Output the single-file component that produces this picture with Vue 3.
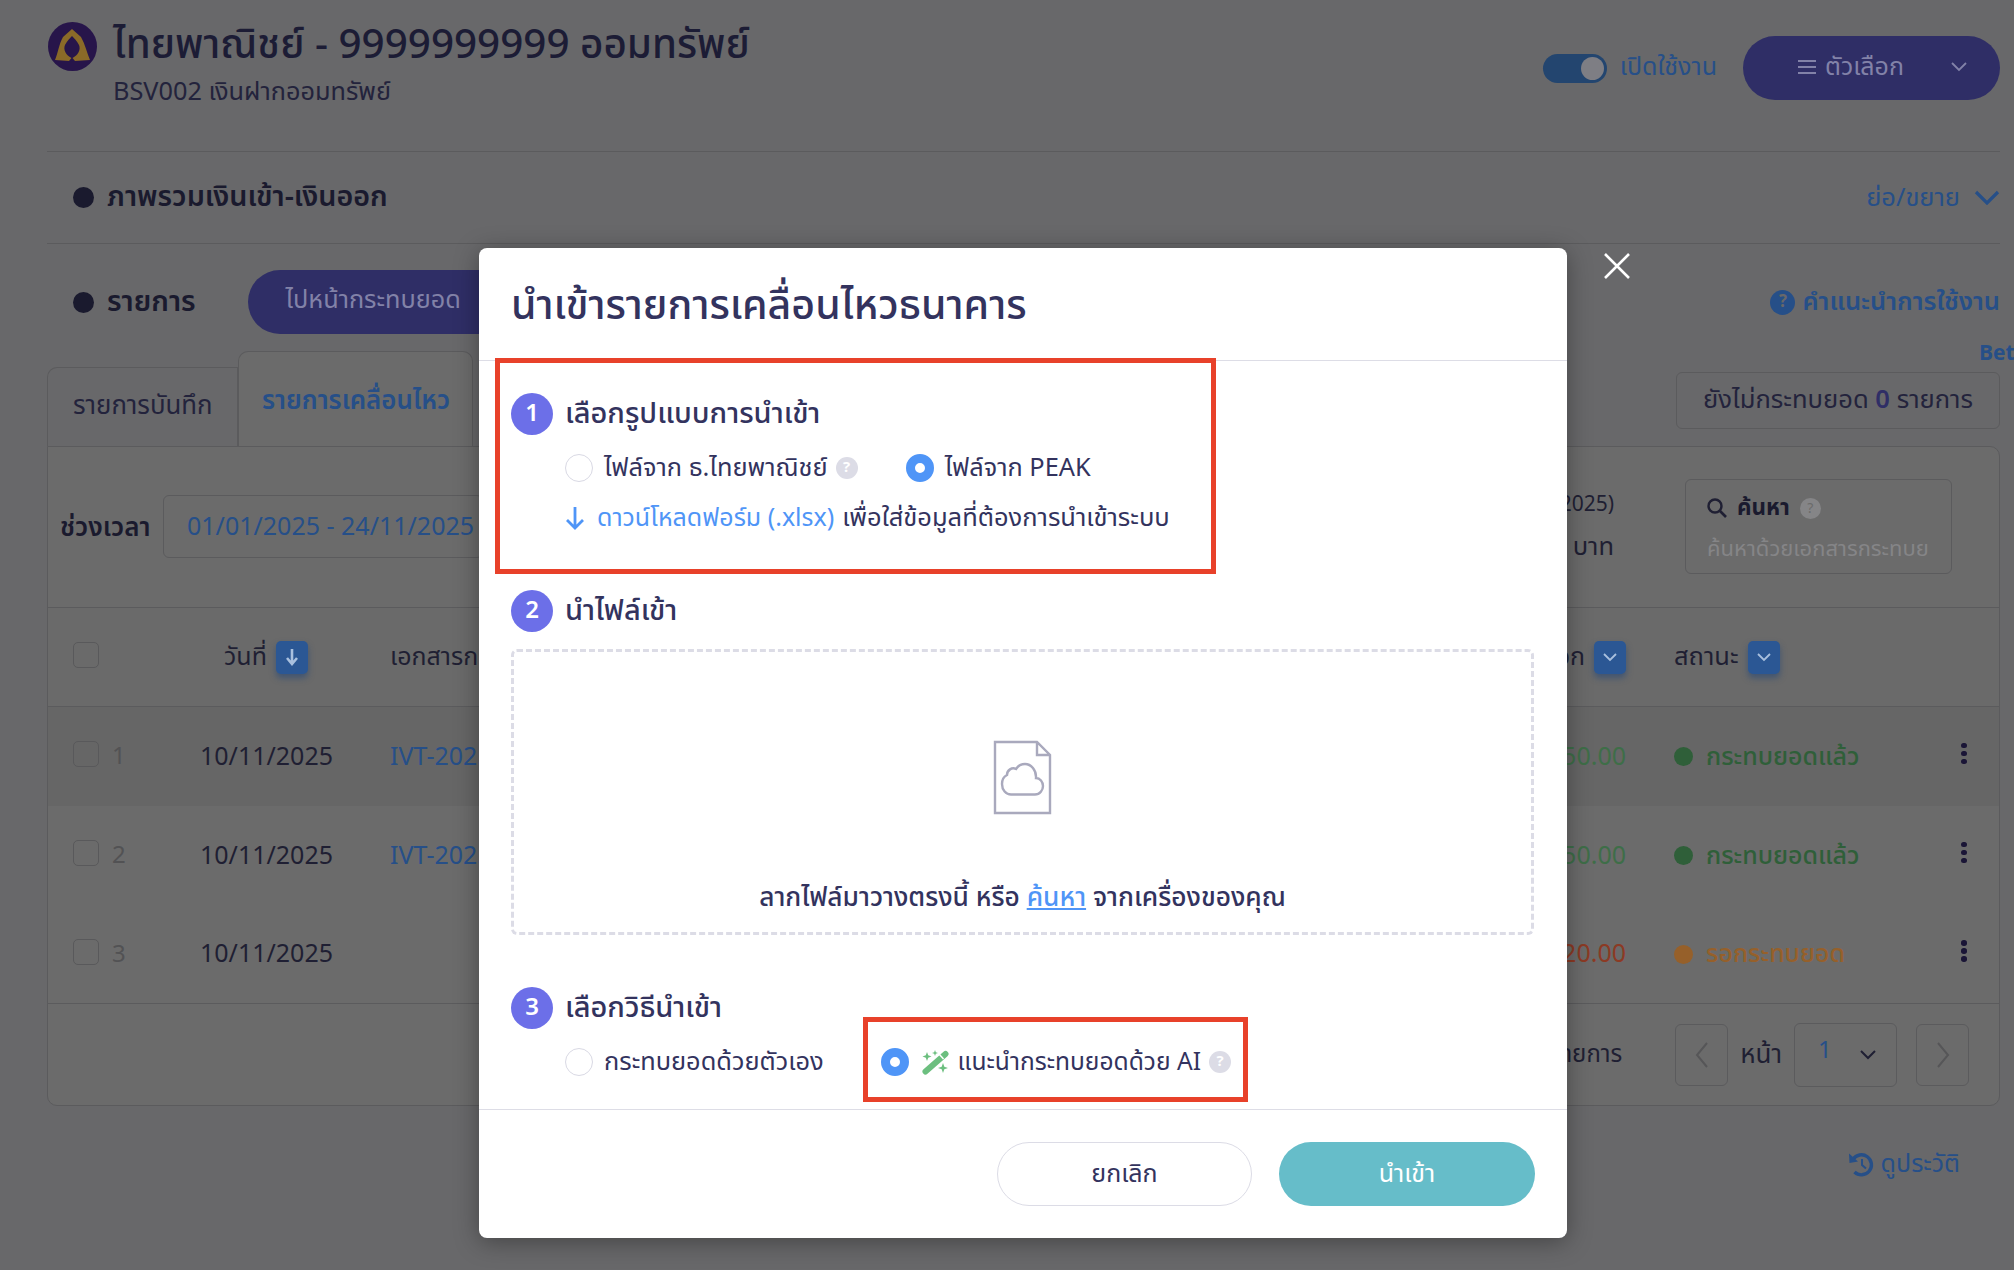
<template>
  <div class="page">
    <!-- Account header -->
    <header class="acc-head">
      <svg class="bank-logo" viewBox="0 0 49 49">
        <circle cx="24.5" cy="24.5" r="24.5" fill="#27154a" />
        <path d="M24 7 L33 15 C37 22 39 31 42 38 L27 39 L24.500 36 C30 33 33 28 31 23 C29 19 26 16 24 14 C22 16 19 19 17 23 C15 28 18 33 23.500 36 L21 39 L7 38 C10 31 11 22 15 15 Z" fill="#8a6a28" />
      </svg>
      <div class="acc-title">
        <h1>ไทยพาณิชย์ - 9999999999 ออมทรัพย์</h1>
        <p>BSV002 เงินฝากออมทรัพย์</p>
      </div>
      <div class="acc-actions">
        <span class="toggle"><span class="knob"></span></span>
        <span class="toggle-label">เปิดใช้งาน</span>
        <button class="options-btn">
          <svg class="burger" viewBox="0 0 18 14"><path d="M0 1h18M0 7h18M0 13h18" stroke="#8282a8" stroke-width="2" /></svg>
          <span>ตัวเลือก</span>
          <svg class="caret" viewBox="0 0 16 10"><path d="M1 1l7 7 7-7" fill="none" stroke="#8282a8" stroke-width="1.8" /></svg>
        </button>
      </div>
    </header>

    <section class="overview">
      <span class="dot"></span>
      <h2>ภาพรวมเงินเข้า-เงินออก</h2>
      <span class="collapse">ย่อ/ขยาย</span>
      <svg class="collapse-icon" viewBox="0 0 26 15"><path d="M2 2l11 11L24 2" fill="none" stroke="#264f88" stroke-width="3.2" /></svg>
    </section>

    <section class="list-head">
      <span class="dot"></span>
      <h2>รายการ</h2>
      <button class="goto-btn">ไปหน้ากระทบยอด</button>
      <a class="guide">
        <span class="guide-icon">?</span>
        คำแนะนำการใช้งาน
      </a>
    </section>

    <div class="tabs">
      <div class="tab">รายการบันทึก</div>
      <div class="tab active">รายการเคลื่อนไหว</div>
      <div class="pending">ยังไม่กระทบยอด <b>0</b> รายการ</div>
      <span class="beta">Beta</span>
    </div>

    <!-- Statement table -->
    <div class="card">
      <div class="filters">
        <label>ช่วงเวลา</label>
        <div class="date-input">01/01/2025 - 24/11/2025</div>
        <div class="balance">
          <span>(24/11/2025)</span>
          <span>0.00 บาท</span>
        </div>
        <div class="search">
          <div class="search-top">
            <svg viewBox="0 0 20 20"><circle cx="8" cy="8" r="6.5" fill="none" stroke="#1f1f33" stroke-width="2.4" /><path d="M13 13l6 6" stroke="#1f1f33" stroke-width="2.6" /></svg>
            <b>ค้นหา</b>
            <span class="dim-help">?</span>
          </div>
          <div class="search-hint">ค้นหาด้วยเอกสารกระทบย</div>
        </div>
      </div>

      <div class="row head">
        <div class="cell-check"><span class="check"></span></div>
        <div class="head-date">วันที่ <span class="sort"><svg viewBox="0 0 14 18"><path d="M7 1v15M2 10l5 6 5-6" fill="none" stroke="#a9c0de" stroke-width="2.6" /></svg></span></div>
        <div>เอกสารกระทบยอด</div>
        <div class="head-amount">เงินออก <span class="sort"><svg viewBox="0 0 14 9"><path d="M1 1l6 6 6-6" fill="none" stroke="#a9c0de" stroke-width="1.8" /></svg></span></div>
        <div class="head-status">สถานะ <span class="sort"><svg viewBox="0 0 14 9"><path d="M1 1l6 6 6-6" fill="none" stroke="#a9c0de" stroke-width="1.8" /></svg></span></div>
        <div></div>
      </div>

      <div v-for="r in rows" :key="r.no" class="row" :class="{ shaded: r.no === 1 }">
        <div class="cell-check"><span class="check"></span><span class="no">{{ r.no }}</span></div>
        <div>{{ r.date }}</div>
        <div class="doc">{{ r.doc }}</div>
        <div class="amount" :class="r.kind">{{ r.amount }}</div>
        <div class="status" :class="r.kind"><span class="status-dot"></span>{{ r.status }}</div>
        <div class="kebab"><i></i><i></i><i></i></div>
      </div>

      <div class="pager">
        <span class="total">ทั้งหมด 3 รายการ</span>
        <button class="page-btn"><svg viewBox="0 0 14 28"><path d="M12 2L2 14l10 12" fill="none" stroke="#565658" stroke-width="2" /></svg></button>
        <span>หน้า</span>
        <div class="page-select">
          <span>1</span>
          <svg viewBox="0 0 16 10"><path d="M1 1l7 7 7-7" fill="none" stroke="#1f1f33" stroke-width="2" /></svg>
        </div>
        <button class="page-btn"><svg viewBox="0 0 14 28"><path d="M2 2l10 12L2 26" fill="none" stroke="#565658" stroke-width="2" /></svg></button>
      </div>
    </div>

    <div class="history">
      <svg viewBox="0 0 26 25">
        <path d="M5 7.500A10 10 0 1 1 6.500 20" fill="none" stroke="#264f88" stroke-width="3.4" />
        <path d="M1 1.500L10 9.500L1.500 11Z" fill="#264f88" />
        <path d="M14 7v6l4 3.500" fill="none" stroke="#264f88" stroke-width="2" />
      </svg>
      ดูประวัติ
    </div>

    <!-- Import dialog -->
    <div class="overlay">
      <div class="modal">
        <button class="close">
          <svg viewBox="0 0 26 26"><path d="M1 1l24 24M25 1L1 25" stroke="#fff" stroke-width="2.6" /></svg>
        </button>

        <div class="modal-head">นำเข้ารายการเคลื่อนไหวธนาคาร</div>

        <div class="modal-body">
          <div class="step">
            <span class="step-no">1</span>
            <span>เลือกรูปแบบการนำเข้า</span>
          </div>
          <div class="opts first">
            <span class="radio"></span>
            <span class="opt-label">ไฟล์จาก ธ.ไทยพาณิชย์</span>
            <span class="help">?</span>
            <span class="radio on second"></span>
            <span class="opt-label">ไฟล์จาก PEAK</span>
          </div>
          <div class="download">
            <svg viewBox="0 0 20 24"><path d="M10 1v21M2 14l8 8 8-8" fill="none" stroke="#4f95f7" stroke-width="2.8" /></svg>
            <a>ดาวน์โหลดฟอร์ม (.xlsx)</a>
            <span>เพื่อใส่ข้อมูลที่ต้องการนำเข้าระบบ</span>
          </div>

          <div class="step gap">
            <span class="step-no">2</span>
            <span>นำไฟล์เข้า</span>
          </div>
          <div class="dropzone">
            <svg class="file-icon" viewBox="0 0 59 75">
              <path d="M2 2H44L57 15V73H2Z M44 2V15H57" fill="none" stroke="#a9a9bd" stroke-width="2.4" />
              <path d="M18 54.5H42C47 54.5 50 50 50 46C50 42 47 38 43 38C43.5 30 38 24 32 24C28 24 25 26 23 29C19 27 14 30 14 35C10 37 9 40 9 44C9 50 13 54.5 18 54.5Z" fill="none" stroke="#a9a9bd" stroke-width="2.4" />
            </svg>
            <div class="drop-text">ลากไฟล์มาวางตรงนี้ หรือ <a>ค้นหา</a> จากเครื่องของคุณ</div>
          </div>

          <div class="step gap">
            <span class="step-no">3</span>
            <span>เลือกวิธีนำเข้า</span>
          </div>
          <div class="opts first">
            <span class="radio"></span>
            <span class="opt-label manual">กระทบยอดด้วยตัวเอง</span>
            <span class="radio on ai"></span>
            <svg class="wand" viewBox="0 0 27 25">
              <path d="M3.500 21.500L23.500 4" stroke="#6cbf7f" stroke-width="6" stroke-linecap="round" />
              <path d="M17.500 4.500l4 4.500" stroke="#fff" stroke-width="1.500" />
              <path d="M5 2l1.200 3.300L9.500 6.500 6.200 7.700 5 11 3.800 7.700.5 6.500 3.800 5.300zM21 13l1.300 3.700L26 18l-3.700 1.300L21 23l-1.300-3.700L16 18l3.700-1.300zM13 0l.8 2.200L16 3l-2.200.8L13 6l-.8-2.200L10 3l2.200-.8z" fill="#6cbf7f" />
            </svg>
            <span class="opt-label ai-label">แนะนำกระทบยอดด้วย AI</span>
            <span class="help">?</span>
          </div>
        </div>

        <div class="modal-foot">
          <button class="btn ghost">ยกเลิก</button>
          <button class="btn solid">นำเข้า</button>
        </div>

        <!-- review annotations drawn on top of the dialog -->
        <div class="mark mark-format"></div>
        <div class="mark mark-method"></div>
      </div>
    </div>
  </div>
</template>

<script setup>
const rows = [
  { no: 1, date: "10/11/2025", doc: "IVT-20251100001", amount: "1,250.00", status: "กระทบยอดแล้ว", kind: "done" },
  { no: 2, date: "10/11/2025", doc: "IVT-20251100002", amount: "1,250.00", status: "กระทบยอดแล้ว", kind: "done" },
  { no: 3, date: "10/11/2025", doc: "", amount: "1,620.00", status: "รอกระทบยอด", kind: "wait" }
];
</script>

<style>
html, body { background: #68686a; }
</style>

<style scoped>
.page {
  position: relative;
  width: 2014px;
  height: 1270px;
  overflow: hidden;
  box-sizing: border-box;
  padding: 0 14px 0 47px;
  background: #68686a;
  color: #1f1f33;
  font-family: "Noto Sans Thai", "Noto Sans", "Open Sans", sans-serif;
  font-size: 24px;
}
button { font-family: inherit; border: 0; padding: 0; }
h1, h2, p { margin: 0; }

/* Header */
.acc-head {
  display: flex;
  align-items: flex-start;
  height: 152px;
  box-sizing: border-box;
  padding-top: 22px;
  border-bottom: 1px solid #5b5b5d;
}
.bank-logo { width: 49px; height: 49px; margin-left: 1px; flex: none; }
.acc-title { margin-left: 16px; padding-top: 1px; }
.acc-title h1 {
  font-size: 40.4px;
  font-weight: 500;
  line-height: 46px;
  color: #1c1c35;
}
.acc-title p { margin-top: 5px; font-size: 25.3px; line-height: 36px; color: #23233c; }
.acc-actions { margin-left: auto; display: flex; align-items: center; margin-top: 14px; }
.toggle {
  width: 64px;
  height: 29px;
  border-radius: 15px;
  background: #23456f;
  position: relative;
}
.knob {
  position: absolute;
  right: 3px;
  top: 3px;
  width: 23px;
  height: 23px;
  border-radius: 50%;
  background: #7e7e84;
}
.toggle-label { margin: -3px 0 0 13px; color: #264f88; font-size: 25px; }
.options-btn {
  margin-left: 26px;
  width: 257px;
  height: 64px;
  border-radius: 32px;
  background: #2f2e66;
  color: #8282a8;
  font-size: 25px;
  display: flex;
  align-items: center;
  padding: 0 0 3px 55px;
}
.burger { width: 18px; height: 14px; margin-right: 9px; }
.caret { width: 16px; height: 10px; margin-left: 47px; }

/* Section rows */
.overview {
  display: flex;
  align-items: center;
  height: 92px;
  padding-left: 26px;
  box-sizing: border-box;
  border-bottom: 1px solid #5b5b5d;
}
.dot { width: 21px; height: 21px; border-radius: 50%; background: #1a1a2e; flex: none; }
.overview h2, .list-head h2 {
  margin-left: 13px;
  font-size: 28.7px;
  font-weight: 600;
  color: #1a1a2e;
}
.collapse { margin-left: auto; color: #264f88; font-size: 25.5px; }
.collapse-icon { width: 26px; height: 15px; margin-left: 14px; }

.list-head {
  display: flex;
  align-items: center;
  height: 64px;
  margin-top: 26px;
  padding-left: 26px;
}
.goto-btn {
  margin-left: 52px;
  width: 400px;
  height: 64px;
  border-radius: 32px;
  background: #2f2e66;
  color: #8282a8;
  font-size: 25.3px;
  text-align: left;
  padding: 0 0 4px 38px;
}
.guide {
  margin-left: auto;
  display: flex;
  align-items: center;
  gap: 7px;
  color: #264f88;
  font-size: 25.500px;
  font-weight: 600;
}
.guide-icon {
  width: 25px;
  height: 25px;
  border-radius: 50%;
  background: #264f88;
  color: #68686a;
  font-size: 17px;
  font-weight: 700;
  text-align: center;
  line-height: 25px;
}

/* Tabs */
.tabs {
  position: relative;
  display: flex;
  align-items: flex-end;
  height: 94px;
  margin-top: 18px;
}
.tab {
  box-sizing: border-box;
  width: 191px;
  height: 79px;
  padding: 19px 0 0 25px;
  border: 1px solid #5b5b5d;
  border-bottom: 0;
  border-radius: 10px 0 0 0;
  font-size: 25.8px;
  color: #23233c;
  white-space: nowrap;
}
.tab.active {
  width: 235px;
  height: 95px;
  padding: 30px 0 0 23px;
  background: #6b6b6b;
  border-radius: 10px 10px 0 0;
  color: #264f88;
  font-weight: 600;
}
.pending {
  margin: 0 0 17px auto;
  box-sizing: border-box;
  width: 324px;
  height: 57px;
  border: 1px solid #5b5b5d;
  border-radius: 6px;
  text-align: center;
  line-height: 56px;
  font-size: 25.6px;
  color: #23233c;
}
.pending b { color: #2f2e66; font-weight: 600; }
.beta {
  position: absolute;
  left: 1932px;
  top: -14px;
  color: #264f88;
  font-size: 21px;
  font-weight: 700;
}

/* Card + table */
.card {
  border: 1px solid #5b5b5d;
  border-radius: 0 10px 10px 10px;
  background: #6b6b6b;
  height: 660px;
  box-sizing: border-box;
}
.filters {
  display: flex;
  align-items: flex-start;
  height: 161px;
  box-sizing: border-box;
  padding: 32px 47px 0 12px;
  border-bottom: 1px solid #5b5b5d;
}
.filters label { margin-top: 29px; font-weight: 600; width: 103px; font-size: 26px; color: #1a1a2e; }
.date-input {
  margin-top: 16px;
  width: 320px;
  height: 63px;
  box-sizing: border-box;
  border: 1px solid #5b5b5d;
  border-radius: 6px;
  padding-left: 23px;
  line-height: 62px;
  color: #264f88;
  font-size: 25px;
  white-space: nowrap;
}
.balance {
  margin-left: auto;
  margin-right: 71px;
  display: flex;
  flex-direction: column;
  align-items: flex-end;
  gap: 6px;
  line-height: 36px;
  margin-top: 8px;
  font-size: 25.5px;
}
.balance span:first-child { font-size: 21px; }
.search {
  box-sizing: border-box;
  width: 267px;
  height: 95px;
  border: 1px solid #5b5b5d;
  border-radius: 6px;
  padding: 11px 21px;
}
.search-top { display: flex; align-items: center; gap: 10px; font-size: 22.5px; color: #1a1a2e; }
.search-top svg { width: 20px; height: 20px; }
.dim-help {
  width: 21px;
  height: 21px;
  border-radius: 50%;
  background: #858587;
  color: #6b6b6b;
  font-size: 14px;
  line-height: 21px;
  text-align: center;
  margin-left: 0;
}
.search-hint { margin-top: 8px; color: #858587; font-size: 22px; white-space: nowrap; overflow: hidden; }

.row {
  display: grid;
  grid-template-columns: 127px 190px 1fr 240px 303px 70px;
  align-items: center;
  height: 99px;
  box-sizing: border-box;
  padding-left: 25px;
  border-bottom: 1px solid #5b5b5d;
  font-size: 25px;
  color: #1f1f33;
  white-space: nowrap;
  overflow: hidden;
}
.row:not(.head):not(.shaded):not(:nth-last-child(2)) { border-bottom: 0; }
.row.head { font-size: 25px; background: #6a6a6a; }
.row.shaded { background: #666666; border-bottom: 0; }
.cell-check { display: flex; align-items: center; gap: 14px; margin-top: -5px; }
.check {
  width: 26px;
  height: 26px;
  box-sizing: border-box;
  border: 1px solid #59595b;
  border-radius: 5px;
}
.no { color: #525254; font-size: 24px; margin: 6px 0 0 -1px; }
.doc { color: #264f88; }
.head-date { padding-left: 24px; display: flex; align-items: center; gap: 9px; }
.head-amount { display: flex; justify-content: flex-end; align-items: center; gap: 9px; padding-right: 0; }
.head-status { padding-left: 48px; display: flex; align-items: center; gap: 9px; font-size: 25.5px; }
.sort {
  width: 32px;
  height: 33px;
  border-radius: 5px;
  background: #2b5794;
  box-shadow: 0 4px 6px rgba(35, 70, 120, .6);
  display: flex;
  align-items: center;
  justify-content: center;
}
.sort svg { width: 14px; }
.amount { text-align: right; }
.amount.done { color: #3e6e48; }
.amount.wait { color: #8c3a24; }
.status { padding-left: 48px; display: flex; align-items: center; font-weight: 500; }
.status.done { color: #2f5f39; }
.status.wait { color: #96602a; }
.status-dot { width: 19px; height: 19px; border-radius: 50%; margin-right: 13px; background: currentColor; }
.kebab { display: flex; flex-direction: column; align-items: center; gap: 2.500px; margin-top: -6px; }
.kebab i { width: 5.500px; height: 5.500px; border-radius: 50%; background: #1a1536; }

.pager {
  display: flex;
  align-items: center;
  justify-content: flex-end;
  height: 101px;
  padding-right: 30px;
  font-size: 24px;
}
.total { margin-right: 53px; }
.page-btn {
  width: 53px;
  height: 62px;
  background: transparent;
  border: 1px solid #5b5b5d;
  border-radius: 6px;
  display: flex;
  align-items: center;
  justify-content: center;
}
.page-btn svg { width: 14px; height: 28px; }
.pager > span:nth-of-type(2) { margin: 0 12px; font-size: 26px; }
.page-select {
  box-sizing: border-box;
  width: 103px;
  height: 64px;
  margin-right: 19px;
  border: 1px solid #5b5b5d;
  border-radius: 6px;
  display: flex;
  align-items: center;
  padding-left: 23px;
  color: #264f88;
}
.page-select span { margin-top: -8px; }
.page-select svg { width: 16px; height: 10px; margin-left: 28px; }

.history {
  display: flex;
  justify-content: flex-end;
  align-items: center;
  gap: 7px;
  margin-top: 39px;
  padding-right: 40px;
  color: #264f88;
  font-size: 25px;
}
.history svg { width: 26px; height: 25px; }

/* Dialog */
.overlay {
  position: absolute;
  inset: 0;
  padding: 248px 0 0 479px;
}
.modal {
  position: relative;
  box-sizing: border-box;
  width: 1088px;
  height: 990px;
  background: #fff;
  border-radius: 8px;
  box-shadow: 0 4px 24px rgba(0, 0, 0, .35);
  color: #33335e;
}
.close {
  position: absolute;
  left: 1125px;
  top: 5px;
  width: 26px;
  height: 26px;
  background: transparent;
}
.close svg { display: block; width: 26px; height: 26px; }
.modal-head {
  box-sizing: border-box;
  height: 113px;
  padding: 30px 0 0 32px;
  border-bottom: 1px solid #dddde6;
  font-size: 41px;
  font-weight: 500;
  line-height: 56px;
}
.modal-body {
  box-sizing: border-box;
  height: 749px;
  padding: 32px 33px 0 32px;
  border-bottom: 1px solid #dddde6;
}
.step {
  display: flex;
  align-items: center;
  height: 42px;
  gap: 12px;
  font-size: 29px;
  font-weight: 500;
}
.step.gap { margin-top: 52px; }
.step-no {
  width: 42px;
  height: 42px;
  border-radius: 50%;
  background: #6c6fe8;
  color: #fff;
  text-align: center;
  line-height: 42px;
  font-size: 24px;
  font-weight: 600;
}
.opts {
  display: flex;
  align-items: center;
  height: 40px;
  margin-top: 13px;
  padding-left: 54px;
  font-size: 25.4px;
}
.radio {
  box-sizing: border-box;
  width: 28px;
  height: 28px;
  flex: none;
  border: 1px solid #d9d9e4;
  border-radius: 50%;
  background: #fff;
}
.radio.on { border: 9px solid #4f95f7; }
.radio.second { margin-left: 48px; }
.radio.ai { margin-left: 57px; }
.opt-label { margin-left: 11px; white-space: nowrap; }
.help {
  width: 22px;
  height: 22px;
  margin-left: 8px;
  flex: none;
  border-radius: 50%;
  background: #dcdce6;
  color: #fff;
  font-size: 15px;
  font-weight: 700;
  line-height: 22px;
  text-align: center;
}
.wand { width: 27px; height: 25px; margin-left: 13px; flex: none; }
.opt-label.ai-label { margin-left: 9px; font-size: 24.6px; }
.download {
  display: flex;
  align-items: center;
  height: 40px;
  margin-top: 10px;
  padding-left: 54px;
  font-size: 25.5px;
  white-space: nowrap;
}
.download svg { width: 20px; height: 24px; margin-right: 12px; }
.download a { color: #4f95f7; margin-right: 8px; font-size: 25px; }
.dropzone {
  box-sizing: border-box;
  height: 286px;
  margin-top: 17px;
  border: 3px dashed #dcdce6;
  border-radius: 6px;
  display: flex;
  flex-direction: column;
  align-items: center;
  padding-top: 88px;
}
.file-icon { width: 59px; height: 75px; }
.drop-text { margin-top: 63px; font-size: 26.3px; font-weight: 500; line-height: 40px; }
.drop-text a { color: #4f95f7; text-decoration: underline; }
.modal-foot {
  display: flex;
  justify-content: flex-end;
  gap: 27px;
  padding: 32px 32px 0 0;
}
.btn {
  height: 64px;
  border-radius: 32px;
  font-size: 25px;
}
.btn.ghost { width: 255px; background: #fff; border: 1px solid #dcdce6; color: #33335e; }
.btn.solid { width: 256px; background: #66bdc9; color: #fff; }
.mark {
  position: absolute;
  box-sizing: border-box;
  border: 5px solid #e8412a;
  pointer-events: none;
}
.mark-format { left: 16px; top: 110px; width: 721px; height: 216px; }
.mark-method { left: 384px; top: 769px; width: 385px; height: 85px; }
</style>
